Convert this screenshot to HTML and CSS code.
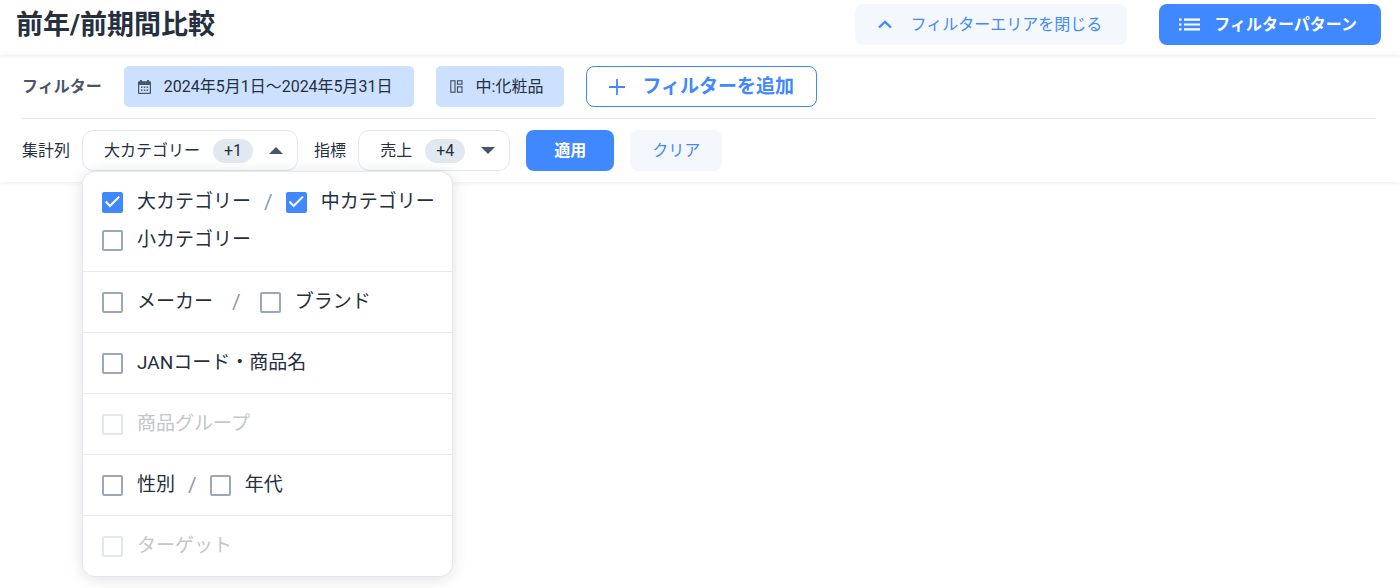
FILE: index.html
```html
<!DOCTYPE html>
<html lang="ja">
<head>
<meta charset="utf-8">
<meta name="viewport" content="width=device-width, initial-scale=1">
<title>前年/前期間比較</title>
<link rel="stylesheet" href="styles.css">
</head>
<body>
<header class="page-header">
  <h1 class="page-title">前年/前期間比較</h1>
  <div class="header-actions">
    <button type="button" class="btn btn-soft btn-collapse">
      <svg class="icon-chevron" viewBox="0 0 14 9" width="14" height="9" aria-hidden="true"><path d="M1 7.5 7 1.8l6 5.7" fill="none" stroke="currentColor" stroke-width="2.3"/></svg>
      フィルターエリアを閉じる
    </button>
    <button type="button" class="btn btn-primary btn-pattern">
      <svg viewBox="0 0 21 13" width="21" height="13" fill="currentColor" aria-hidden="true"><path d="M0 .5h2.500v2.200H0zM5 .5h16v2.200H5zM0 5.400h2.500v2.200H0zM5 5.400h16v2.200H5zM0 10.300h2.500v2.200H0zM5 10.300h16v2.200H5z"/></svg>
      フィルターパターン
    </button>
  </div>
</header>
<main class="filter-area">
  <section class="filter-row">
    <h2 class="filter-label">フィルター</h2>
    <button type="button" class="btn btn-chip">
      <svg viewBox="0 0 13 14" width="13" height="14" aria-hidden="true"><path fill="currentColor" fill-rule="evenodd" d="M2 0h2v1.300h5V0h2v1.300h1a1 1 0 0 1 1 1V13a1 1 0 0 1-1 1H1a1 1 0 0 1-1-1V2.300a1 1 0 0 1 1-1h1zM1.200 5v7.800h10.600V5zM3 6.500h1.500V8H3zm2.800 0h1.500V8H5.800zm2.800 0h1.500V8H8.600zM3 9.500h1.500V11H3zm2.800 0h1.500V11H5.800zm2.800 0h1.500V11H8.600z"/></svg>
      2024年5月1日〜2024年5月31日
    </button>
    <button type="button" class="btn btn-chip">
      <svg viewBox="0 0 13 13" width="13" height="13" fill="none" stroke="currentColor" stroke-width="1.2" aria-hidden="true"><rect x=".8" y=".8" width="4.200" height="11.400"/><rect x="7.500" y=".8" width="4.500" height="3.400"/><rect x="7.500" y="6.800" width="4.500" height="5.400"/></svg>
      中:化粧品
    </button>
    <button type="button" class="btn btn-outline">
      <svg viewBox="0 0 16 16" width="16" height="16" aria-hidden="true"><path d="M8 0v16M0 8h16" stroke="currentColor" stroke-width="1.8"/></svg>
      フィルターを追加
    </button>
  </section>
  <section class="condition-row">
    <div class="field">
      <span id="column-label">集計列</span>
      <div class="dropdown">
        <button type="button" class="btn btn-select" aria-haspopup="true" aria-expanded="true" aria-describedby="column-label">
          大カテゴリー
          <span class="count">+1</span>
          <svg viewBox="0 0 14 7" width="14" height="7" aria-hidden="true"><path d="M0 7 7 0l7 7z" fill="#4a5568"/></svg>
        </button>
        <div class="menu" role="group" aria-labelledby="column-label">
          <div class="menu-group">
            <div class="menu-line">
              <label class="option"><input type="checkbox" checked>大カテゴリー</label>
              <span class="slash">/</span>
              <label class="option"><input type="checkbox" checked>中カテゴリー</label>
            </div>
            <div class="menu-line">
              <label class="option"><input type="checkbox">小カテゴリー</label>
            </div>
          </div>
          <div class="menu-group">
            <div class="menu-line menu-line-wide">
              <label class="option"><input type="checkbox">メーカー</label>
              <span class="slash">/</span>
              <label class="option"><input type="checkbox">ブランド</label>
            </div>
          </div>
          <div class="menu-group">
            <div class="menu-line">
              <label class="option"><input type="checkbox">JANコード・商品名</label>
            </div>
          </div>
          <div class="menu-group">
            <div class="menu-line">
              <label class="option option-disabled"><input type="checkbox" disabled>商品グループ</label>
            </div>
          </div>
          <div class="menu-group">
            <div class="menu-line">
              <label class="option"><input type="checkbox">性別</label>
              <span class="slash">/</span>
              <label class="option"><input type="checkbox">年代</label>
            </div>
          </div>
          <div class="menu-group">
            <div class="menu-line">
              <label class="option option-disabled"><input type="checkbox" disabled>ターゲット</label>
            </div>
          </div>
        </div>
      </div>
    </div>
    <div class="field">
      <span id="metric-label">指標</span>
      <button type="button" class="btn btn-select" aria-haspopup="true" aria-expanded="false" aria-describedby="metric-label">
        売上
        <span class="count">+4</span>
        <svg viewBox="0 0 14 7" width="14" height="7" aria-hidden="true"><path d="M0 0h14L7 7z" fill="#4a5568"/></svg>
      </button>
    </div>
    <button type="button" class="btn btn-primary btn-apply">適用</button>
    <button type="button" class="btn btn-soft btn-clear">クリア</button>
  </section>
</main>
</body>
</html>
```
FILE: styles.css
```css
* {
  box-sizing: border-box;
}

body {
  min-height: 100vh;
  margin: 0;
  background: #fff;
  color: #252f3f;
  font: 16px/24px Roboto, "Noto Sans CJK JP", sans-serif;
}

.page-header {
  display: flex;
  align-items: center;
  justify-content: space-between;
  padding: 4px 19px 10px 16px;
  background: #fff;
  box-shadow: 0 1px 5px rgba(0, 0, 0, 0.08);
}

.page-title {
  margin: 0;
  font-size: 27px;
  line-height: 40px;
  font-weight: 700;
}

.header-actions {
  display: flex;
  gap: 32px;
}

.btn {
  display: flex;
  align-items: center;
  justify-content: center;
  height: 41px;
  padding: 0 20px;
  border: 0;
  border-radius: 8px;
  background: none;
  color: inherit;
  font: inherit;
  white-space: nowrap;
  cursor: pointer;
}

.btn svg {
  flex: none;
}

.btn-soft {
  background: #f4f8fd;
  color: #3f88ff;
}

.btn-primary {
  background: #3f88ff;
  color: #fff;
  font-weight: 700;
}

.btn-collapse {
  gap: 19px;
  padding: 0 25px 0 23px;
}

.btn-pattern {
  gap: 14px;
  padding: 0 24px 0 20px;
}

.filter-area {
  padding: 11px 24px 11px 22px;
  box-shadow: 0 1px 5px rgba(0, 0, 0, 0.08);
}

.filter-row {
  display: flex;
  align-items: center;
  gap: 22px;
  padding-bottom: 11px;
  border-bottom: 1px solid #e2e8f0;
}

.filter-label {
  margin: 0;
  color: #4a5568;
  font-size: 16px;
  font-weight: 700;
}

.btn-chip {
  gap: 13px;
  padding: 0 21px 0 14px;
  border-radius: 5px;
  background: #cce0ff;
}

.btn-chip svg {
  color: #4a5568;
}

.btn-outline {
  gap: 17px;
  padding: 0 22px;
  border: 1px solid #3f88ff;
  color: #3f88ff;
  font-size: 19px;
  font-weight: 700;
}

.condition-row {
  display: flex;
  align-items: center;
  gap: 16px;
  padding-top: 11px;
}

.field {
  display: flex;
  align-items: center;
  gap: 12px;
}

.dropdown {
  position: relative;
}

.btn-select {
  gap: 13px;
  padding: 0 14px 0 21px;
  border: 1px solid #e2e8f0;
  border-radius: 11px;
  background: #fff;
}

.btn-select svg {
  margin-left: 3px;
}

.count {
  padding: 0 11px;
  border-radius: 12px;
  background: #e2e8f0;
}

.btn-apply {
  padding: 0 28px;
}

.btn-clear {
  padding: 0 22px;
}

.menu {
  position: absolute;
  top: 100%;
  left: 0;
  z-index: 1;
  width: 371px;
  border: 1px solid #e2e8f0;
  border-radius: 13px;
  background: #fff;
  box-shadow: 0 2px 16px rgba(0, 0, 0, 0.12);
}

.menu-group {
  padding: 11px 16px 11px 19px;
}

.menu-group:first-child {
  padding-bottom: 12px;
}

.menu-group + .menu-group {
  border-top: 1px solid #e8eaed;
}

.menu-line {
  display: flex;
  align-items: center;
  gap: 13px;
  height: 38px;
  font-size: 19px;
}

.menu-line-wide {
  gap: 19px;
}

.slash {
  color: #8c9bb3;
  font-size: 21px;
}

.option {
  display: flex;
  align-items: center;
  gap: 14px;
  white-space: nowrap;
}

.option-disabled {
  color: #c4c6c9;
}

.option input {
  appearance: none;
  flex: none;
  width: 21px;
  height: 21px;
  margin: 0;
  border: 2px solid #9aa7bc;
  border-radius: 2px;
  background: #fff;
}

.option input:disabled {
  border-color: #e2e6ee;
}

.option input:checked {
  display: grid;
  place-items: center;
  border-color: #3f88ff;
  background: #3f88ff;
}

.option input:checked::before {
  content: "";
  width: 15px;
  height: 12px;
  background: #fff;
  clip-path: polygon(0 52%, 10% 40%, 33% 71%, 90% 0, 100% 11%, 33% 96%);
}
```
